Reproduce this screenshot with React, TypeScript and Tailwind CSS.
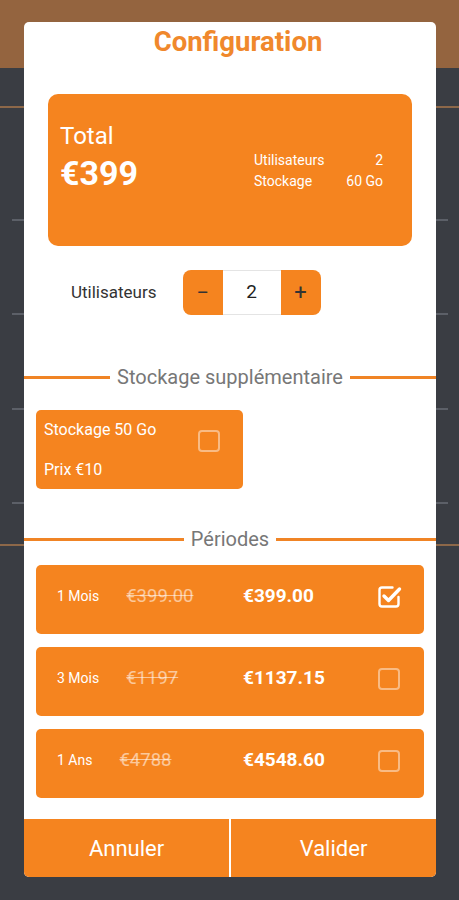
import React from 'react';

const ORANGE = 'bg-[#f5841f]';

function Box({ checked }: { checked?: boolean }) {
    if (checked) {
        return (
            <svg width="28" height="28" viewBox="0 0 26 26" fill="none">
                <path d="M16.5 3.5H6A2.5 2.5 0 0 0 3.5 6v14A2.5 2.5 0 0 0 6 22.5h14a2.5 2.5 0 0 0 2.5-2.5v-7" stroke="white" strokeWidth="2.4" strokeLinecap="round" />
                <path d="M8 12l4.5 4.5L23.5 5" stroke="white" strokeWidth="3.4" strokeLinecap="round" strokeLinejoin="round" />
            </svg>
        );
    }
    return <div className="w-[22px] h-[22px] rounded-[4px] border-2 border-white/45" />;
}

function Divider({ label }: { label: string }) {
    return (
        <div className="flex items-center gap-[7px]">
            <div className="flex-1 h-[3px] bg-[#f08425]" />
            <span className="text-[20px] leading-[22px] text-[#777]">{label}</span>
            <div className="flex-1 h-[3px] bg-[#f08425]" />
        </div>
    );
}

function BgRow({ full, orange }: { full?: boolean; orange?: boolean }) {
    const c = orange ? 'bg-[#8d6849]' : 'bg-[#5c6068]';
    if (full) return <div className={`h-[2px] w-full ${c}`} />;
    return (
        <div className="flex justify-between h-[2px]">
            <div className={`w-[12px] ml-[12px] ${c}`} />
            <div className={`w-[12px] mr-[11px] ${c}`} />
        </div>
    );
}

const periods = [
    { label: '1 Mois', old: '€399.00', price: '€399.00', checked: true },
    { label: '3 Mois', old: '€1197', price: '€1137.15' },
    { label: '1 Ans', old: '€4788', price: '€4548.60' },
];

export default function App() {
    return (
        <div className="relative h-[900px] w-full overflow-hidden bg-[#3a3d43] font-['Roboto',sans-serif]">
            {/* background screen behind the dialog */}
            <div className="h-[68px] bg-[#94643f]" />
            <div className="flex flex-col">
                <div className="mt-[38px]"><BgRow full orange /></div>
                <div className="mt-[111px]"><BgRow /></div>
                <div className="mt-[92px]"><BgRow /></div>
                <div className="mt-[93px]"><BgRow /></div>
                <div className="mt-[92px]"><BgRow /></div>
                <div className="mt-[40px]"><BgRow full orange /></div>
            </div>

            {/* dialog */}
            <div className="absolute left-[24px] top-[22px] w-[412px] h-[855px] bg-white rounded-[5px] overflow-hidden flex flex-col">
                <h2 className="pt-[4px] pl-[16px] text-center text-[27.5px] leading-[32px] font-bold text-[#f0882c]">Configuration</h2>

                <div className={`mt-[36px] mx-[24px] h-[152px] rounded-[10px] ${ORANGE} flex pl-[12px] pr-[29px] pt-[28px] text-white`}>
                    <div className="flex-1 flex flex-col">
                        <span className="text-[24px] leading-[28px]">Total</span>
                        <span className="mt-[3px] text-[34px] leading-[40px] font-bold">€399</span>
                    </div>
                    <div className="mt-[28px] w-[129px] text-[14px] leading-[21px]">
                        <div className="flex justify-between"><span>Utilisateurs</span><span>2</span></div>
                        <div className="flex justify-between"><span>Stockage</span><span>60 Go</span></div>
                    </div>
                </div>

                <div className="mt-[24px] flex items-center pl-[47px] gap-[26px]">
                    <span className="text-[17px] text-[#333]">Utilisateurs</span>
                    <div className="flex h-[45px] w-[138px] rounded-[8px] overflow-hidden">
                        <button className={`w-[40px] ${ORANGE} text-[22px] text-[#333] flex items-center justify-center`}>−</button>
                        <div className="flex-1 border-y border-[#e4e4e4] flex items-center justify-center text-[19px] text-[#222]">2</div>
                        <button className={`w-[40px] ${ORANGE} text-[22px] text-[#333] flex items-center justify-center`}>+</button>
                    </div>
                </div>

                <div className="mt-[51px]"><Divider label="Stockage supplémentaire" /></div>

                <div className={`mt-[22px] ml-[12px] w-[207px] h-[79px] rounded-[5px] ${ORANGE} flex justify-between pl-[8px] pr-[23px] text-white`}>
                    <div className="flex flex-col text-[16px] leading-[20px] pt-[10px] gap-[20px]">
                        <span>Stockage 50 Go</span>
                        <span>Prix €10</span>
                    </div>
                    <div className="pt-[20px]"><Box /></div>
                </div>

                <div className="mt-[39px]"><Divider label="Périodes" /></div>

                <div className="mt-[15px] mx-[12px] flex flex-col gap-[13px]">
                    {periods.map((p) => (
                        <div key={p.label} className={`h-[69px] rounded-[5px] ${ORANGE} flex items-center pb-[6px] pl-[21px] pr-[22px] text-white`}>
                            <div className="w-[186px] flex items-center gap-[27px]">
                                <span className="text-[14px]">{p.label}</span>
                                <span className="text-[18.5px] line-through text-white/55">{p.old}</span>
                            </div>
                            <span className="flex-1 text-[19px] font-bold">{p.price}</span>
                            <div className="w-[26px] flex justify-center"><Box checked={p.checked} /></div>
                        </div>
                    ))}
                </div>

                <div className="mt-auto flex h-[58px] text-white text-[22px]">
                    <button className={`flex-1 ${ORANGE}`}>Annuler</button>
                    <div className="w-[2px] bg-white" />
                    <button className={`flex-1 ${ORANGE}`}>Valider</button>
                </div>
            </div>
        </div>
    );
}
